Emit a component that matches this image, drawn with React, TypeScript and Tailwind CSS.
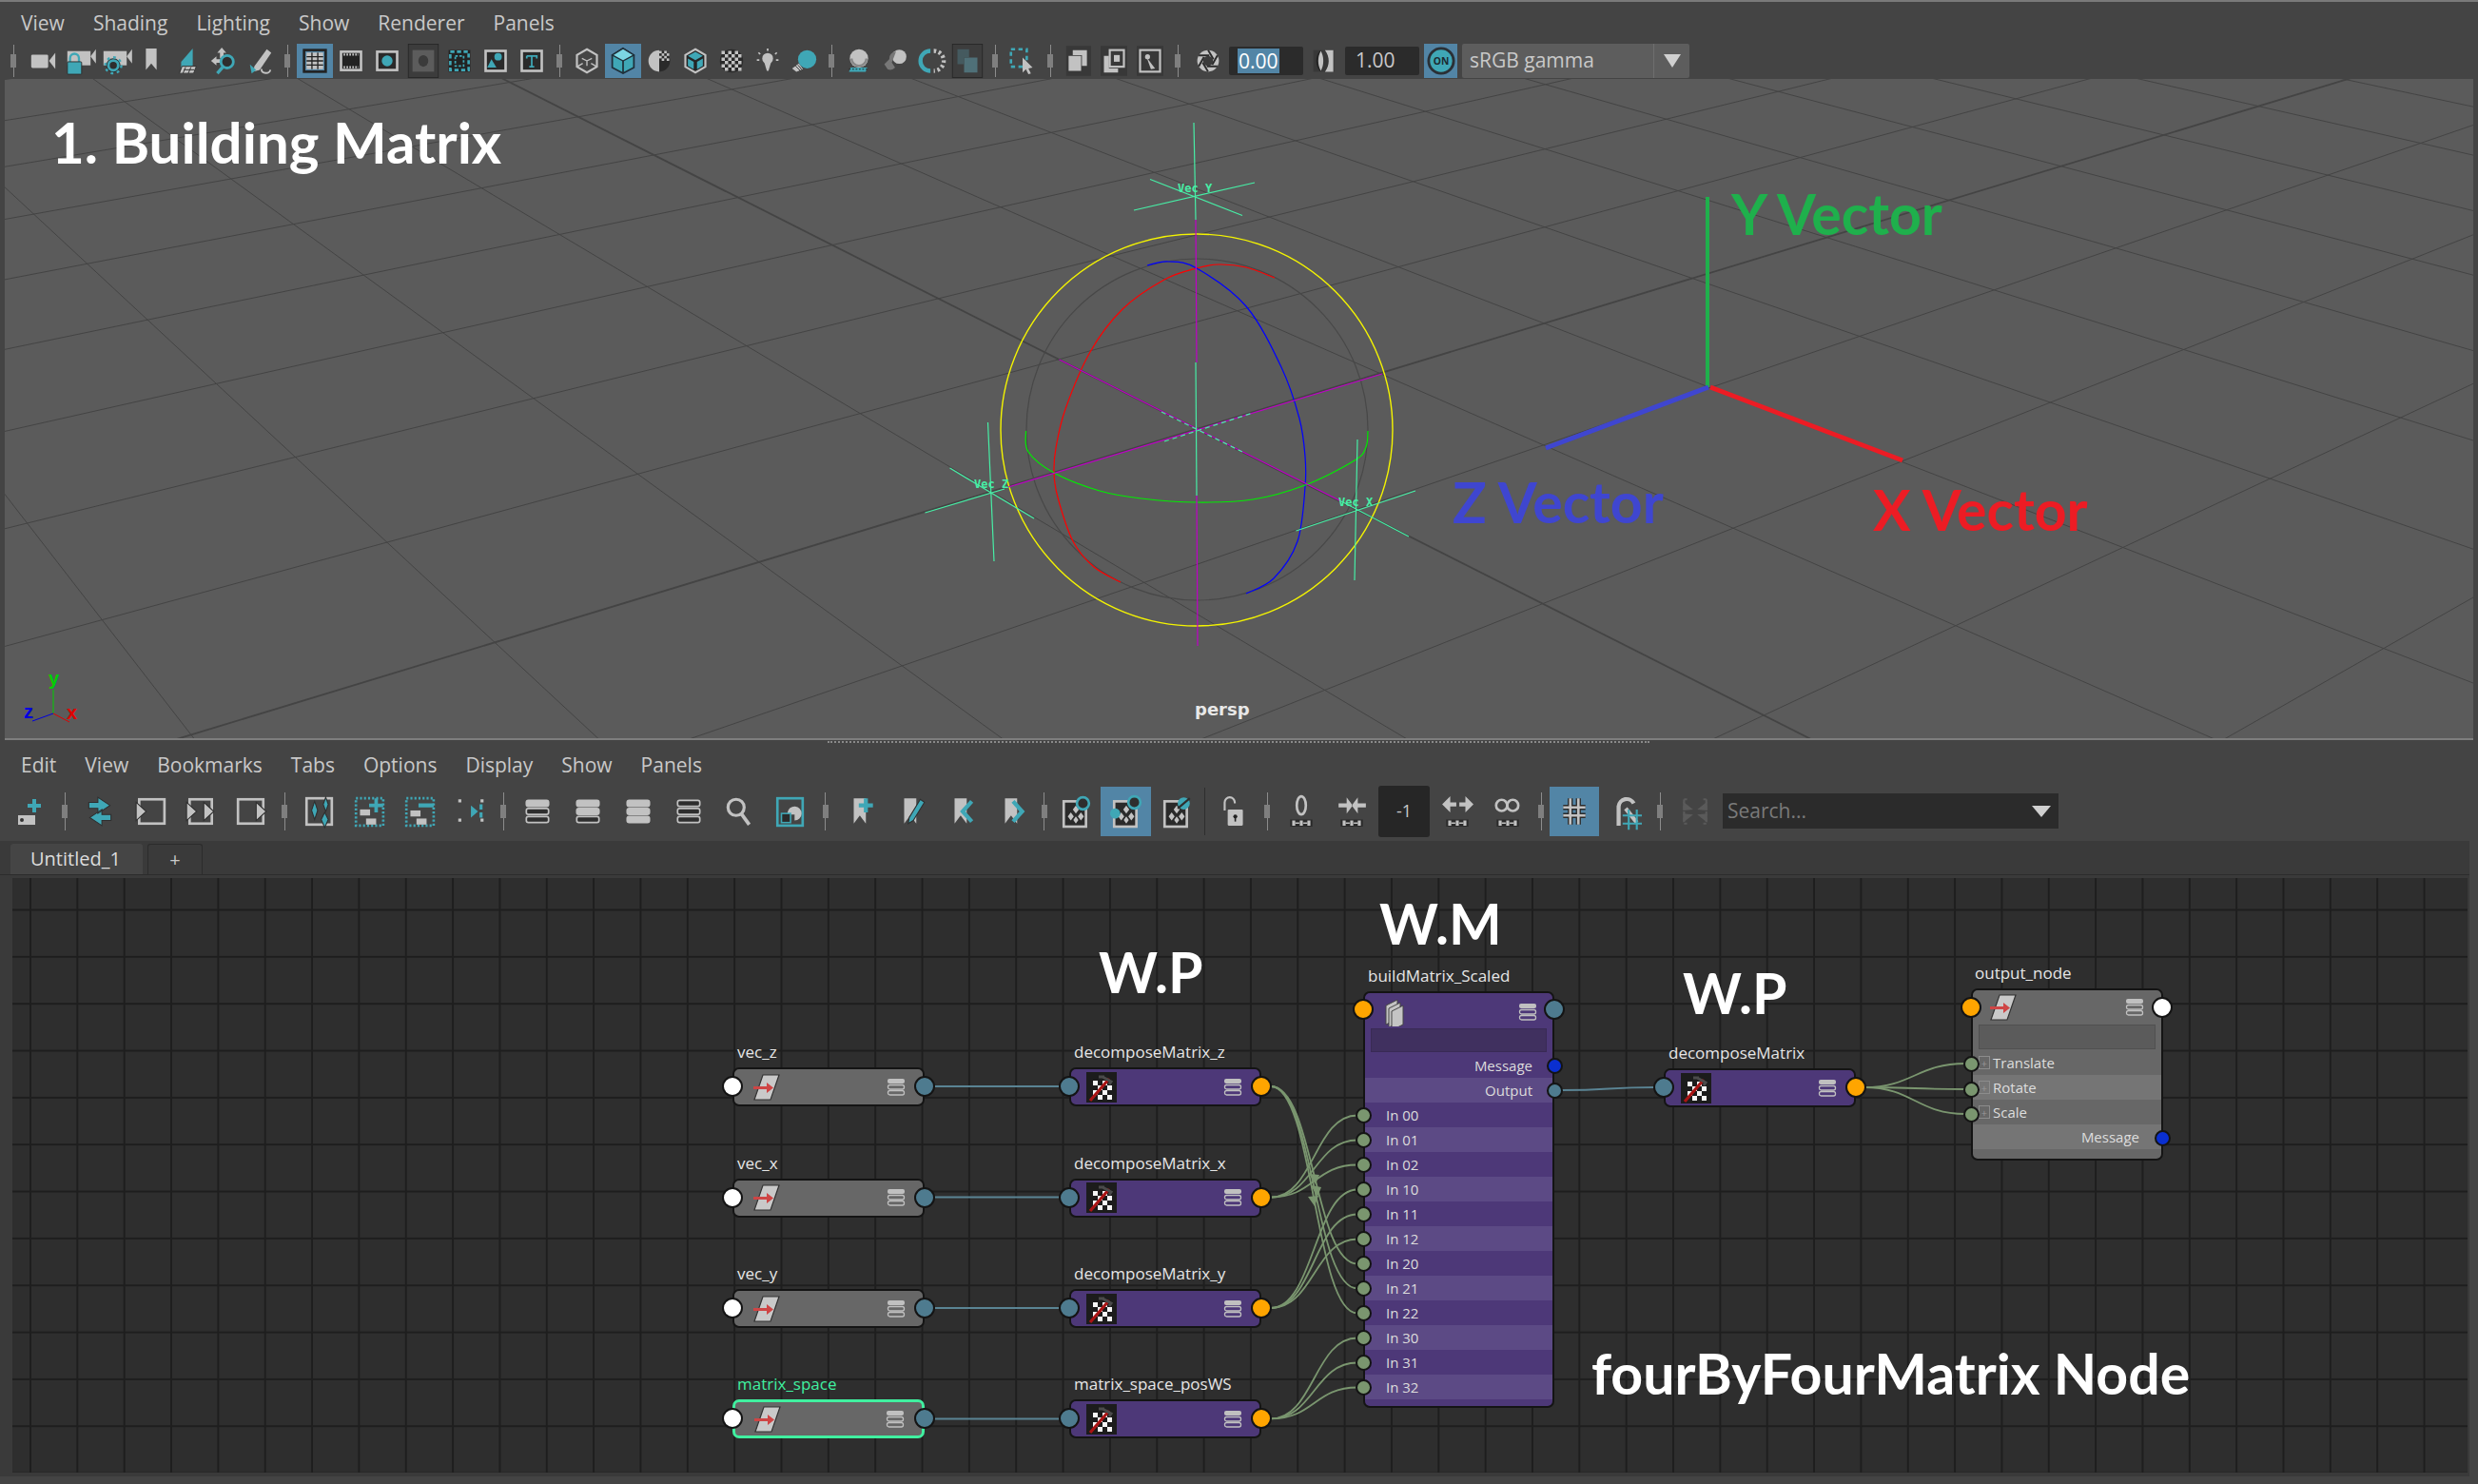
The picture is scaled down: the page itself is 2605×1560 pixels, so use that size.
import React from "react";

const G = "#c2c2c2";
const T = "#3fa7b6";
const D = "#2e2e2e";

const ff = { fontFamily: '"Open Sans", sans-serif' };

function Rows({ k }: { k: boolean[] }) {
  return (
    <>
      {k.map((f, i) => (
        <rect key={i} x="5" y={5 + i * 8} width="22" height="6" rx="2" fill={f ? G : D} stroke={G} strokeWidth="1.6" />
      ))}
    </>
  );
}
const Checker = ({ x, y, n, s }: { x: number; y: number; n: number; s: number }) => (
  <>
    {Array.from({ length: n * n }).map((_, i) =>
      (i % n + Math.floor(i / n)) % 2 === 0 ? (
        <rect key={i} x={x + (i % n) * s} y={y + Math.floor(i / n) * s} width={s} height={s} fill={G} />
      ) : null
    )}
  </>
);
const Diamonds = () => (
  <>
    <path d="M16 10l3 4-3 4-3-4zM11 17l3 4-3 4-3-4zM21 17l3 4-3 4-3-4zM16 21l2.5 3.5-2.5 3.5-2.5-3.5z" fill={G} />
  </>
);
const BM = () => <path d="M8 3h12v25l-6-8-6 8z" fill={G} />;
const Dots = () => (
  <g>
    <rect x="5" y="24" width="22" height="7" fill="#2a2a2a" />
    <path d="M7 25h3v5H7zM14.5 25h3v5h-3zM22 25h3v5h-3z" fill={G} />
    <path d="M10 27.5h4M18 27.5h4" stroke={G} strokeWidth="1.5" />
  </g>
);

const icons: Record<string, React.ReactNode> = {
  cam: (
    <>
      <rect x="3" y="9" width="19" height="15" rx="1.5" fill={G} />
      <path d="M30 7v18l-7-9z" fill={G} />
    </>
  ),
  camlock: (
    <>
      <rect x="3" y="5" width="26" height="16" fill={G} />
      <path d="M35 3v16l-6-8z" fill={G} />
      <path d="M6 18v-5a5 5 0 0110 0v5" fill="none" stroke={T} strokeWidth="2.5" />
      <rect x="3" y="17" width="16" height="14" rx="1" fill={T} stroke={D} />
    </>
  ),
  camgear: (
    <>
      <rect x="3" y="5" width="26" height="16" fill={G} />
      <path d="M35 3v16l-6-8z" fill={G} />
      <circle cx="14" cy="21" r="8" fill={D} />
      <circle cx="14" cy="21" r="5.5" fill="none" stroke={T} strokeWidth="3" />
      <circle cx="14" cy="21" r="9" fill="none" stroke={T} strokeWidth="2.5" strokeDasharray="3 4" />
    </>
  ),
  bm: <path d="M10 2h12v24l-6-7-6 7z" fill={G} />,
  plane: (
    <>
      <path d="M9 17L22 2v19L9 30z" fill={T} />
      <path d="M7 30l3-8h16l-3 8z" fill={G} stroke={D} />
      <path d="M12 26h12M14 23l-3 7M20 23l-3 7" stroke={D} />
    </>
  ),
  panzoom: (
    <>
      <path d="M14 1l5 6h-3v6h-4V7H9zM2 16l6-5v3h6v4H8v3z" fill={G} />
      <circle cx="20" cy="17" r="7" fill={D} stroke={T} strokeWidth="3" />
      <path d="M15 23l-6 7" stroke={T} strokeWidth="3.5" />
    </>
  ),
  pencil: (
    <>
      <path d="M10 22L24 3l5 4L16 26l-7 2z" fill={G} />
      <path d="M5 20l7 6-5 4z" fill={T} />
      <path d="M18 25c0 6 9 6 10 1" fill="none" stroke={G} strokeWidth="2" />
    </>
  ),
  gridb: (
    <>
      <rect x="3" y="3" width="26" height="26" fill="none" stroke="#222" strokeWidth="3" />
      <Checker x={6} y={6} n={1} s={20} />
      <path d="M12.5 6v20M19.5 6v20M6 11h20M6 16h20M6 21h20" stroke="#222" strokeWidth="1.5" />
    </>
  ),
  film: (
    <>
      <rect x="4" y="5" width="24" height="22" fill="#222" stroke={G} strokeWidth="3" />
      <path d="M7 8.5h18M7 23.5h18" stroke={G} strokeWidth="2.5" strokeDasharray="2 1.5" />
    </>
  ),
  res: (
    <>
      <rect x="4" y="5" width="24" height="22" fill="#2a2a2a" stroke={G} strokeWidth="3" />
      <circle cx="16" cy="16" r="6.5" fill={T} />
    </>
  ),
  resD: (
    <>
      <rect x="-2" y="-4" width="36" height="40" fill="#3c3c3c" stroke="#262626" />
      <rect x="3" y="3" width="26" height="26" fill="#5c5c5c" />
      <ellipse cx="16" cy="16" rx="6" ry="7" fill="#3b3b3b" />
    </>
  ),
  gate: (
    <>
      <rect x="3" y="3" width="26" height="26" fill="#222" />
      <rect x="5" y="5" width="22" height="22" fill="none" stroke={T} strokeWidth="3" strokeDasharray="5 3" />
      <rect x="11" y="10" width="10" height="12" fill="none" stroke={T} strokeWidth="2" strokeDasharray="3 2" />
    </>
  ),
  shapes: (
    <>
      <rect x="4" y="4" width="24" height="24" fill="#2a2a2a" stroke={G} strokeWidth="3" />
      <path d="M11 14l6 10H6z" fill={T} />
      <circle cx="19" cy="11" r="4.5" fill={T} />
    </>
  ),
  tbox: (
    <>
      <rect x="4" y="4" width="24" height="24" fill="#2a2a2a" stroke={G} strokeWidth="3" />
      <path d="M10 10h12v3M16 10v13M13 23h6M10 13v-3" fill="none" stroke={T} strokeWidth="2" />
    </>
  ),
  cubeW: (
    <>
      <path d="M16 2l12 7v14l-12 7-12-7V9z" fill="none" stroke={G} strokeWidth="2.5" />
      <path d="M16 16v6M16 16l-6-3M16 16l6-3M4 23l7-4M28 23l-7-4" stroke={G} strokeWidth="1.5" />
    </>
  ),
  cubeS: (
    <>
      <path d="M16 1l13 8v15l-13 7-13-7V9z" fill={T} stroke="#1f2f3a" strokeWidth="2" />
      <path d="M16 1l13 8-13 7-13-7z" fill="#7cd6e3" stroke="#1f2f3a" strokeWidth="1.5" />
      <path d="M16 16v15" stroke="#1f2f3a" strokeWidth="2" />
    </>
  ),
  halfS: (
    <>
      <circle cx="16" cy="16" r="13" fill="#2a2a2a" />
      <path d="M16 3a13 13 0 000 26z" fill={G} />
      <Checker x={16} y={4} n={4} s={3} />
    </>
  ),
  cubeT: (
    <>
      <path d="M16 2l12 7v14l-12 7-12-7V9z" fill="#252525" stroke={G} strokeWidth="2.5" />
      <path d="M16 5l9 5-9 5-9-5z" fill={T} />
      <path d="M7 13l7 4v9l-7-4zM25 13l-7 4v9l7-4z" fill={T} />
    </>
  ),
  checkS: (
    <>
      <circle cx="16" cy="16" r="14" fill="#2a2a2a" />
      <Checker x={4} y={4} n={6} s={4} />
    </>
  ),
  bulb: (
    <>
      <circle cx="16" cy="13" r="6.5" fill={G} />
      <path d="M12 18h8l-3 10h-2z" fill={G} />
      <path d="M16 1v3M5 6l2 2M27 6l-2 2M3 15h3M26 15h3" stroke={G} strokeWidth="2" />
    </>
  ),
  litS: (
    <>
      <circle cx="20" cy="14" r="11" fill={T} />
      <path d="M2 25l8-6 5 7-8 3z" fill={G} />
      <path d="M6 22l6 6M9 21l5 6" stroke={D} />
    </>
  ),
  shadS: (
    <>
      <circle cx="16" cy="13" r="11" fill={G} />
      <path d="M7 13a9 9 0 0018 0" fill="none" stroke="#888" strokeWidth="3" />
      <path d="M6 24h20l-2 5H4z" fill={T} />
      <path d="M4 26h22" stroke="#222" strokeDasharray="2 2" />
    </>
  ),
  capS: (
    <>
      <circle cx="21" cy="11" r="8.5" fill={G} />
      <path d="M9 14a8 8 0 018-9l-5 13 4 6a8 8 0 01-9 2l-4-6z" fill="#777" />
    </>
  ),
  ringS: (
    <>
      <path d="M15 4a12 12 0 000 24" fill="none" stroke={T} strokeWidth="5" />
      <path d="M19 4a12 12 0 010 24" fill="none" stroke={G} strokeWidth="5" strokeDasharray="3 3" />
    </>
  ),
  dimD: (
    <>
      <rect x="-2" y="-4" width="36" height="40" fill="#3d3d3d" stroke="#262626" />
      <rect x="12" y="12" width="16" height="18" fill="#4f7078" />
      <path d="M4 2h14v10H12v8H4z" fill="#455a5f" />
    </>
  ),
  selCursor: (
    <>
      <rect x="2" y="2" width="19" height="21" fill="none" stroke={T} strokeWidth="3" strokeDasharray="5 4" />
      <path d="M16 12l12 12-5 1 3 6-3 1-3-6-4 4z" fill={G} />
    </>
  ),
  boxes1: (
    <>
      <rect x="2" y="-2" width="30" height="36" fill="#383838" />
      <path d="M10 3h17v19h-6v-13H10z" fill={G} />
      <path d="M5 10h15v18H5z" fill={G} />
    </>
  ),
  boxes2: (
    <>
      <rect x="0" y="-2" width="32" height="36" fill="#383838" />
      <rect x="11" y="3" width="17" height="20" fill="none" stroke={G} strokeWidth="2.5" />
      <path d="M4 10h6v15h11v5H4z" fill={G} />
      <rect x="16" y="9" width="7" height="8" fill={G} />
    </>
  ),
  image: (
    <>
      <rect x="0" y="-2" width="32" height="36" fill="#383838" />
      <rect x="4" y="3" width="24" height="26" fill="none" stroke={G} strokeWidth="2.5" />
      <circle cx="13" cy="11" r="3" fill={G} />
      <path d="M12 12l10 13-5 1z" fill={G} />
    </>
  ),
  aperture: (
    <>
      <circle cx="16" cy="16" r="13" fill={G} />
      {[0, 60, 120, 180, 240, 300].map((a) => (
        <path key={a} d="M16 3L22.5 14" stroke="#2a2a2a" strokeWidth="2.2" transform={`rotate(${a} 16 16)`} />
      ))}
      <circle cx="16" cy="16" r="6" fill="#3a3a3a" />
    </>
  ),
  halfC: (
    <>
      <rect x="3" y="3" width="25" height="26" fill="#383838" />
      <path d="M17 3h10v26H17c6-8 6-18 0-26z" fill={G} />
      <path d="M12 4C6 11 6 21 12 28" fill="none" stroke="#222" strokeWidth="2" />
      <path d="M12 4C8 11 8 21 12 28c4-7 4-17 0-24z" fill="#c2c2c2" />
    </>
  ),
  on: (
    <>
      <circle cx="16" cy="16" r="14" fill={T} stroke="#2a3036" strokeWidth="3" />
      <text x="16" y="20.5" textAnchor="middle" fontSize="11" fontWeight="700" fill="#1c2a30" fontFamily="Open Sans">ON</text>
    </>
  ),
  addNode: (
    <>
      <path d="M3 20h18v10H3z" fill={G} />
      <circle cx="7" cy="25" r="2" fill="#333" />
      <path d="M20 3v14M13 10h14" stroke={T} strokeWidth="4" />
    </>
  ),
  swap: <path d="M14 2l12 8-12 8v-5H5V7h9zM18 14v5h9v6h-9v5L6 22z" fill={T} stroke={D} />,
  gL: (
    <>
      <rect x="5" y="4" width="25" height="24" fill="none" stroke={G} strokeWidth="2.5" />
      <path d="M2 7l10 9-10 9z" fill={G} stroke={D} />
    </>
  ),
  gB: (
    <>
      <rect x="5" y="4" width="22" height="24" fill="none" stroke={G} strokeWidth="2.5" />
      <path d="M2 7l10 9-10 9zM19 7l10 9-10 9z" fill={G} stroke={D} />
    </>
  ),
  gR: (
    <>
      <rect x="3" y="4" width="25" height="24" fill="none" stroke={G} strokeWidth="2.5" />
      <path d="M21 7l10 9-10 9z" fill={G} stroke={D} />
    </>
  ),
  sparkle: (
    <>
      <rect x="4" y="3" width="25" height="26" fill="none" stroke={G} strokeWidth="2.5" />
      <path d="M12 6l3 9-3 9-3-9zM23 2l2.5 7-2.5 7-2.5-7zM22 17l3.5 7-3.5 8-3.5-8z" fill={T} stroke={D} />
    </>
  ),
  lPlus: (
    <>
      <rect x="3" y="3" width="27" height="27" fill="none" stroke={T} strokeWidth="2.5" strokeDasharray="2 2" />
      <rect x="7" y="14" width="10" height="6" fill={G} />
      <rect x="13" y="23" width="10" height="6" fill={G} />
      <path d="M23 3v14M16 10h14" stroke={T} strokeWidth="3.5" />
    </>
  ),
  lMinus: (
    <>
      <rect x="3" y="3" width="27" height="27" fill="none" stroke={T} strokeWidth="2.5" strokeDasharray="2 2" />
      <rect x="7" y="15" width="10" height="6" fill={G} />
      <rect x="13" y="23" width="10" height="6" fill={G} />
      <path d="M15 10h15" stroke={T} strokeWidth="4" />
    </>
  ),
  inOut: (
    <>
      <path d="M6 4v5M6 23v5M28 4v5M28 23v5" stroke={G} strokeWidth="3" strokeDasharray="3 3" />
      <path d="M27 9v14" stroke={T} strokeWidth="3" strokeDasharray="5 3" />
      <path d="M8 16h9V10l7 6-7 6v-6" fill={T} />
    </>
  ),
  r1: <Rows k={[true, false, false]} />,
  r2: <Rows k={[true, true, false]} />,
  r3: <Rows k={[true, true, true]} />,
  r0: <Rows k={[false, false, false]} />,
  search: (
    <>
      <circle cx="13" cy="12" r="8" fill="none" stroke={G} strokeWidth="3" />
      <path d="M18 18l8 11" stroke={G} strokeWidth="3.5" />
    </>
  ),
  frame: (
    <>
      <rect x="4" y="3" width="25" height="27" fill="none" stroke={T} strokeWidth="2.5" />
      <path d="M14 17a7 7 0 117 8v-6h-7z" fill={G} />
      <rect x="8" y="18" width="9" height="9" fill="#2a2a2a" stroke={T} strokeWidth="1.5" />
    </>
  ),
  bmAdd: (
    <>
      <BM />
      <path d="M20 3v14M13 10h14" stroke={T} strokeWidth="4" />
    </>
  ),
  bmEdit: (
    <>
      <BM />
      <path d="M13 22L24 4l4 3-11 18-5 3z" fill={T} stroke={D} />
    </>
  ),
  bmPrev: (
    <>
      <BM />
      <path d="M25 6l-9 10 9 10" fill="none" stroke={T} strokeWidth="4" />
    </>
  ),
  bmNext: (
    <>
      <BM />
      <path d="M16 6l9 10-9 10" fill="none" stroke={T} strokeWidth="4" />
    </>
  ),
  nodeA: (
    <>
      <rect x="4" y="6" width="22" height="25" fill="#2a2a2a" stroke={G} strokeWidth="2.5" />
      <Diamonds />
      <circle cx="23" cy="8" r="6" fill={D} stroke={T} strokeWidth="2.5" />
    </>
  ),
  nodeB: (
    <>
      <rect x="4" y="6" width="22" height="25" fill="#2a2a2a" stroke={G} strokeWidth="2.5" />
      <Diamonds />
      <circle cx="24" cy="7" r="6" fill={D} stroke={T} strokeWidth="2.5" />
      <circle cx="5" cy="18" r="5" fill={T} />
    </>
  ),
  nodeC: (
    <>
      <rect x="4" y="6" width="22" height="25" fill="#2a2a2a" stroke={G} strokeWidth="2.5" />
      <Diamonds />
      <circle cx="23" cy="8" r="6" fill={T} />
      <path d="M17 13L29 3" stroke={D} strokeWidth="2" />
    </>
  ),
  lock: (
    <>
      <path d="M8 15V7a5 5 0 0110 0v1" fill="none" stroke={G} strokeWidth="2" transform="translate(-1 0)" />
      <rect x="10" y="14" width="15" height="16" rx="1" fill={G} />
      <circle cx="17.5" cy="21" r="2" fill="#222" />
      <path d="M17.5 21v5" stroke="#222" strokeWidth="1.5" />
    </>
  ),
  zero: (
    <>
      <ellipse cx="16" cy="10" rx="4.5" ry="9" fill="none" stroke={G} strokeWidth="2.5" />
      <Dots />
    </>
  ),
  pinch: (
    <>
      <path d="M3 8h8V2l6 8-6 8v-6H3zM30 8h-8V2l-6 8 6 8v-6h8z" fill={G} />
      <Dots />
    </>
  ),
  spread: (
    <>
      <path d="M15 7H9V1L1 9l8 8v-6h6zM18 7h6V1l8 8-8 8v-6h-6z" fill={G} />
      <Dots />
    </>
  ),
  infin: (
    <>
      <circle cx="10" cy="10" r="5.5" fill="none" stroke={G} strokeWidth="2.5" />
      <circle cx="21" cy="10" r="5.5" fill="none" stroke={G} strokeWidth="2.5" />
      <Dots />
    </>
  ),
  hash: (
    <>
      <path d="M12 3v26M20 3v26M5 12h22M5 20h22" stroke="#2a2a2a" strokeWidth="5" />
      <path d="M12 3v26M20 3v26M5 12h22M5 20h22" stroke={G} strokeWidth="2.5" />
    </>
  ),
  magnet: (
    <>
      <path d="M9 30V11a8 8 0 0115 -3" fill="none" stroke={G} strokeWidth="4" />
      <path d="M16 13l11 14" stroke={G} strokeWidth="4" />
      <path d="M19 14v20M27 14v20M13 20h19M13 28h19" stroke={T} strokeWidth="2" />
    </>
  ),
  dimFrame: (
    <>
      <path d="M6 4v24M28 4v24M6 4h3M25 4h3M6 28h3M25 28h3" stroke="#5a5a5a" strokeWidth="2" strokeDasharray="4 2" />
      <path d="M5 6l10 8-10 1zM29 6l-10 8 10 1zM5 27l10-8-10-1zM29 27l-10-8 10-1z" fill="#5a5a5a" />
    </>
  ),
};

function Ic({ n, s = 32, active, w, h }: { n: string; s?: number; active?: boolean; w: string; h: string }) {
  return (
    <div className={`${w} ${h} shrink-0 flex items-center justify-center ${active ? "bg-[#5285a6]" : ""}`}>
      <svg width={s} height={s} viewBox="0 0 32 32" className="overflow-visible">
        {icons[n]}
      </svg>
    </div>
  );
}

function Sep({ h = "h-[34px]", w = "w-[20px]" }: { h?: string; w?: string }) {
  return (
    <div className={`${w} ${h} shrink-0 flex items-center justify-center relative`}>
      <div className="w-[1px] h-full bg-[#8c8c8c]" />
      <div className="absolute w-[6px] h-[14px] bg-[#7f7f7f]" />
    </div>
  );
}

function Menu({ items, gap }: { items: string[]; gap: string }) {
  return (
    <div className={`flex items-center ${gap} pl-[22px] text-[21px] leading-none text-[#c9c9c9]`} style={ff}>
      {items.map((m) => (
        <span key={m}>{m}</span>
      ))}
    </div>
  );
}

/* ---- perspective ground grid ---- */
const O = [1258, 451];
const A = [155.5, 78.5];
const B = [203.6, -61.9];
const pb = -0.0725;
const pd = 0.0574;
function proj(u: number, v: number) {
  const w = 1 + pb * u + pd * v;
  return [O[0] + (u * A[0] + v * B[0]) / w, O[1] + (u * A[1] + v * B[1]) / w];
}
function gridLines() {
  const out: { d: string; thick: boolean; k: string }[] = [];
  for (let k = -24; k <= 24; k++) {
    const v0 = Math.max(-40, (0.1 - 1 - pb * k) / pd);
    const p0 = proj(k, v0);
    const p1 = proj(k, 30);
    out.push({ d: `M${p0[0]} ${p0[1]}L${p1[0]} ${p1[1]}`, thick: k === 0, k: "u" + k });
    const u1 = Math.min(40, (0.1 - 1 - pd * k) / pb);
    const q0 = proj(-30, k);
    const q1 = proj(u1, k);
    out.push({ d: `M${q0[0]} ${q0[1]}L${q1[0]} ${q1[1]}`, thick: k === 0, k: "v" + k });
  }
  return out;
}
function smooth(p: number[][]) {
  let d = `M${p[0][0]} ${p[0][1]}`;
  for (let i = 0; i < p.length - 1; i++) {
    const p0 = p[Math.max(0, i - 1)];
    const p1 = p[i];
    const p2 = p[i + 1];
    const p3 = p[Math.min(p.length - 1, i + 2)];
    d += `C${p1[0] + (p2[0] - p0[0]) / 6} ${p1[1] + (p2[1] - p0[1]) / 6} ${p2[0] - (p3[0] - p1[0]) / 6} ${p2[1] - (p3[1] - p1[1]) / 6} ${p2[0]} ${p2[1]}`;
  }
  return d;
}
const CY = "#47eea6";
const MG = "#c000c8";

function Scene() {
  return (
    <svg className="absolute inset-0" width="2595" height="693" viewBox="5 83 2595 693">
      {gridLines().map((l) => (
        <path key={l.k} d={l.d} stroke="#444444" strokeWidth={l.thick ? 1.8 : 1} fill="none" />
      ))}
      <g fill="none" strokeWidth="1.2">
        <circle cx="1258.5" cy="451.5" r="179.5" stroke="#484848" />
        <circle cx="1258" cy="452" r="206" stroke="#f4f400" strokeWidth="1.4" />
        <path stroke="#ff0000" d={smooth([[1340, 292], [1310, 281], [1281, 278], [1258, 282], [1224, 294], [1180, 325], [1146, 370], [1120, 430], [1110, 471], [1108, 497], [1112, 523], [1128, 569], [1150, 596], [1178, 612]])} />
        <path stroke="#0000ff" d={smooth([[1206, 279], [1228, 275], [1258, 282], [1310, 322], [1347, 386], [1366, 440], [1372, 480], [1372, 512], [1364, 569], [1339, 608], [1310, 624]])} />
        <path stroke="#00ee00" d={smooth([[1078.5, 453], [1081, 475], [1108, 497], [1156, 516], [1200, 524], [1258, 528], [1317, 525], [1372, 510], [1424, 484], [1436, 470], [1438, 453]])} />
        <path stroke={MG} d="M1257 231L1258 381M1258 521L1259 679M1113.5 378L1410 527M1060 512L1453 393" />
        <path stroke={CY} strokeDasharray="5 4" d="M1221 433L1306 475M1224 464L1317 434" />
        <path stroke={CY} d="M1255 129L1257 231M1257 381L1258 521" />
        <path stroke={CY} d="M1209 188.5L1306 226.5M1192 221L1319 192M1038.5 444L1045 590M998.5 492L1087 545M972.5 539L1056 514M1427 462L1424 610M1362.5 558L1488 516M1410 527L1481 564" />
      </g>
      <g fill="none" strokeLinecap="butt">
        <path d="M1795 207V407" stroke="#1fb04c" strokeWidth="4" />
        <path d="M1796 407L1625 471" stroke="#3f46d0" strokeWidth="5" />
        <path d="M1798 407L2000 484" stroke="#ed1c24" strokeWidth="5" />
        <path d="M56 725V750" stroke="#00d000" />
        <path d="M56 750L73 759" stroke="#e00000" />
        <path d="M56 750L34 758" stroke="#0000e0" />
      </g>
    </svg>
  );
}

/* ---- node editor ---- */
const ARROW_BAR = (
  <svg width="20" height="20" viewBox="0 0 20 20" className="shrink-0">
    <rect x="1" y="1" width="18" height="5" rx="2" fill="#c0c0c0" />
    <rect x="1.5" y="7.5" width="17" height="4.5" rx="2" fill="none" stroke="#c0c0c0" strokeWidth="1.3" />
    <rect x="1.5" y="13.5" width="17" height="4.5" rx="2" fill="none" stroke="#c0c0c0" strokeWidth="1.3" />
  </svg>
);
const VecIcon = () => (
  <svg width="28" height="28" viewBox="0 0 28 28" className="shrink-0">
    <path d="M10 1h17L18 27H1z" fill="#c9c9c9" stroke="#333" strokeWidth="1.2" />
    <path d="M0 13h14V9l7 5.5-7 5.5v-4H0z" fill="#cf4545" />
  </svg>
);
const CheckIcon = ({ w = 32 }: { w?: number }) => (
  <svg width={w} height="32" viewBox="0 0 32 32" preserveAspectRatio="none" className="shrink-0">
    <rect width="32" height="32" fill="#1c1c1c" />
    {[[7, 9], [17, 9], [12, 14], [22, 14], [7, 19], [17, 19], [12, 24], [22, 24]].map(([x, y], i) => (
      <rect key={i} x={x} y={y} width="5" height="5" fill="#f6f6f6" />
    ))}
    <path d="M4 30L24 7" stroke="#aa1414" strokeWidth="3.2" />
    <path d="M17 5l9 5-2 3M13 5h6" stroke="#4a4a4a" strokeWidth="3" fill="none" />
  </svg>
);
const StackIcon = () => (
  <svg width="24" height="30" viewBox="0 0 24 30" className="shrink-0">
    {[0, 3, 6].map((o) => (
      <path key={o} d={`M${1 + o} ${8 + o}l12-6v20l-12 6z`} fill="#c4c4c4" stroke="#444" />
    ))}
  </svg>
);

type Kind = "orange" | "teal" | "white" | "green" | "blue";
const portCol: Record<Kind, string> = {
  orange: "bg-[#ffa500]",
  teal: "bg-[#4e7b8f]",
  white: "bg-white",
  green: "bg-[#7a966f]",
  blue: "bg-[#0a2fd0]",
};
const CX = 13;
const CYY = 923;
function Port({ x, y, k, small }: { x: number; y: number; k: Kind; small?: boolean }) {
  const s = small ? 17 : 22;
  return (
    <div
      className={`absolute rounded-full border-2 border-[#141414] ${portCol[k]}`}
      style={{ left: x - CX - s / 2, top: y - CYY - s / 2, width: s, height: s }}
    />
  );
}
function Label({ x, y, t, sel }: { x: number; y: number; t: string; sel?: boolean }) {
  return (
    <div
      className={`absolute text-[17px] leading-none whitespace-nowrap ${sel ? "text-[#40f0a0]" : "text-[#e6e6e6]"}`}
      style={{ ...ff, left: x - CX, top: y - CYY - 9 }}
    >
      {t}
    </div>
  );
}
function SmallNode({ x, y, t, purple, sel, lk, rk }: { x: number; y: number; t: string; purple?: boolean; sel?: boolean; lk: Kind; rk: Kind }) {
  const cy = y + 20;
  return (
    <>
      <Label x={x + 5} y={y - 16} t={t} sel={sel} />
      <div
        className={`absolute w-[202px] h-[41px] rounded-[7px] flex items-center justify-between pr-[18px] ${purple ? "bg-[#4d3878] pl-[16px]" : "bg-[#676767] pl-[20px]"} ${sel ? "border-[3px] border-[#40f0a0]" : "border-2 border-[#141414]"}`}
        style={{ left: x - CX, top: y - CYY }}
      >
        {purple ? <CheckIcon /> : <VecIcon />}
        {ARROW_BAR}
      </div>
      <Port x={x} y={cy} k={lk} />
      <Port x={x + 202} y={cy} k={rk} />
    </>
  );
}

const inNames = ["In 00", "In 01", "In 02", "In 10", "In 11", "In 12", "In 20", "In 21", "In 22", "In 30", "In 31", "In 32"];
function inY(i: number) {
  return 1172.5 + 26 * i;
}
function wire(x0: number, y0: number, x1: number, y1: number, dx = 38) {
  return `M${x0} ${y0}C${x0 + dx} ${y0} ${x1 - dx} ${y1} ${x1} ${y1}`;
}
const rowsY = [1142, 1258.6, 1375, 1491.4];

function Wires() {
  const ends: [number, number[]][] = [
    [rowsY[0], [6, 7, 8]],
    [rowsY[1], [0, 1, 2]],
    [rowsY[2], [3, 4, 5]],
    [rowsY[3], [9, 10, 11]],
  ];
  return (
    <svg className="absolute inset-0" width="2581" height="625" viewBox={`${CX} ${CYY} 2581 625`}>
      <g fill="none" stroke="#5a8494" strokeWidth="2">
        {rowsY.map((y) => (
          <path key={y} d={`M982 ${y}H1116`} />
        ))}
        <path d={wire(1642, 1146, 1740, 1143, 50)} />
      </g>
      <g fill="none" stroke="#7a966f" strokeWidth="1.8">
        {ends.map(([y, is]) =>
          is.map((i) => <path key={i} d={wire(1336, y, 1427, inY(i), 45)} />)
        )}
        <path d={wire(1960, 1143, 2066, 1118, 50)} />
        <path d={wire(1960, 1143, 2066, 1145, 50)} />
        <path d={wire(1960, 1143, 2066, 1171, 50)} />
      </g>
      <g fill="#7a966f">
        <path d="M1376 1234l11 1-4 10zM1378 1246l11 2-4 10zM1375 1258l11-1-4 11z" />
      </g>
    </svg>
  );
}

function BuildNode() {
  return (
    <>
      <Label x={1438} y={1026} t="buildMatrix_Scaled" />
      <div
        className="absolute w-[201px] h-[438px] rounded-[7px] border-2 border-[#141414] bg-[#4d3878] flex flex-col"
        style={{ left: 1433 - CX, top: 1042 - CYY }}
      >
        <div className="h-[37px] shrink-0 flex items-center justify-between pl-[21px] pr-[16px] pt-[2px]">
          <StackIcon />
          {ARROW_BAR}
        </div>
        <div className="mx-[6px] h-[25px] shrink-0 bg-[#40305f] border border-[#392a55]" />
        <div className="h-[1px] shrink-0" />
        {["Message", "Output"].map((t, i) => (
          <div
            key={t}
            className={`h-[26px] shrink-0 flex items-center justify-end pr-[21px] text-[15px] text-[#dcdcdc] ${i % 2 ? "bg-[#5c4a85]" : ""}`}
            style={ff}
          >
            {t}
          </div>
        ))}
        {inNames.map((t, i) => (
          <div
            key={t}
            className={`h-[26px] shrink-0 flex items-center pl-[22px] text-[15px] text-[#dcdcdc] ${i % 2 ? "bg-[#5c4a85]" : ""}`}
            style={ff}
          >
            {t}
          </div>
        ))}
      </div>
      <Port x={1433} y={1061} k="orange" />
      <Port x={1634} y={1061} k="teal" />
      <Port x={1634} y={1120} k="blue" small />
      <Port x={1634} y={1146} k="teal" small />
      {inNames.map((t, i) => (
        <Port key={t} x={1433} y={inY(i)} k="green" small />
      ))}
    </>
  );
}
function OutputNode() {
  const rows = [
    { t: "Translate", y: 1118 },
    { t: "Rotate", y: 1145 },
    { t: "Scale", y: 1171 },
  ];
  return (
    <>
      <Label x={2076} y={1023} t="output_node" />
      <div
        className="absolute w-[202px] h-[181px] rounded-[7px] border-2 border-[#141414] bg-[#676767] flex flex-col"
        style={{ left: 2072 - CX, top: 1039 - CYY }}
      >
        <div className="h-[36px] shrink-0 flex items-center justify-between pl-[18px] pr-[18px]">
          <VecIcon />
          {ARROW_BAR}
        </div>
        <div className="mx-[6px] h-[26px] shrink-0 bg-[#5b5b5b] border border-[#505050]" />
        <div className="h-[1px] shrink-0" />
        {rows.map((r, i) => (
          <div
            key={r.t}
            className={`h-[26px] shrink-0 flex items-center pl-[6px] gap-[3px] text-[15px] text-[#dedede] ${i === 1 ? "bg-[#757575]" : ""}`}
            style={ff}
          >
            <span className="w-[12px] h-[14px] border border-[#8c8c8c] flex items-center justify-center text-[11px] leading-none text-[#9a9a9a]">+</span>
            {r.t}
          </div>
        ))}
        <div className="h-[26px] shrink-0 flex items-center justify-end pr-[23px] text-[15px] text-[#dedede] bg-[#757575]" style={ff}>
          Message
        </div>
      </div>
      <Port x={2072} y={1059} k="orange" />
      <Port x={2273} y={1059} k="white" />
      {rows.map((r) => (
        <Port key={r.t} x={2072} y={r.y} k="green" small />
      ))}
      <Port x={2273} y={1196} k="blue" small />
    </>
  );
}

function Ann({ t, c, cls }: { t: string; c?: string; cls: string }) {
  return (
    <div className={`absolute font-bold leading-none whitespace-nowrap ${c ?? "text-white"} ${cls}`} style={{ fontFamily: "Lato, sans-serif" }}>
      {t}
    </div>
  );
}

const tb1a = ["cam", "camlock", "camgear", "bm", "plane", "panzoom", "pencil"];
const tb1b = ["gridb", "film", "res", "resD", "gate", "shapes", "tbox"];
const tb1c = ["cubeW", "cubeS", "halfS", "cubeT", "checkS", "bulb", "litS"];
const tb1d = ["shadS", "capS", "ringS", "dimD"];
const tb1e = ["boxes1", "boxes2", "image"];
const tb2a = ["swap", "gL", "gB", "gR"];
const tb2b = ["sparkle", "lPlus", "lMinus", "inOut"];
const tb2c = ["r1", "r2", "r3", "r0", "search", "frame"];
const tb2d = ["bmAdd", "bmEdit", "bmPrev", "bmNext"];

const w38 = "w-[38px]";
const h36 = "h-[36px]";
const w53 = "w-[53px]";
const h52 = "h-[52px]";

export default function App() {
  return (
    <div className="relative w-[2605px] h-[1560px] overflow-hidden bg-[#444444] flex flex-col" style={ff}>
      {/* top panel */}
      <div className="h-[778px] shrink-0 flex flex-col border-t-2 border-[#7a7a7a]">
        <div className="h-[43px] shrink-0 flex items-center pt-[1px]">
          <Menu items={["View", "Shading", "Lighting", "Show", "Renderer", "Panels"]} gap="gap-[30px]" />
        </div>
        <div className="h-[38px] shrink-0 flex items-center pl-[4px]">
          <Sep />
          <div className="w-[2px] shrink-0" />
          {tb1a.map((n) => <Ic key={n} n={n} w={w38} h={h36} s={30} />)}
          <Sep />
          {tb1b.map((n, i) => <Ic key={n} n={n} w={w38} h={h36} s={28} active={i === 0} />)}
          <Sep />
          {tb1c.map((n, i) => <Ic key={n} n={n} w={w38} h={h36} s={28} active={i === 1} />)}
          <Sep />
          {tb1d.map((n) => <Ic key={n} n={n} w={w38} h={h36} s={28} />)}
          <Sep />
          <Ic n="selCursor" w={w38} h={h36} s={28} />
          <Sep />
          {tb1e.map((n) => <Ic key={n} n={n} w={w38} h={h36} s={28} />)}
          <Sep />
          <Ic n="aperture" w="w-[44px]" h={h36} s={28} />
          <div className="w-[78px] h-[30px] shrink-0 rounded-[2px] bg-[#2b2b2b] flex items-center pl-[9px]">
            <span className="bg-[#5285a6] text-white text-[21px] leading-[26px] pl-[1px] pr-[1px]">0.00</span>
          </div>
          <Ic n="halfC" w="w-[44px]" h={h36} s={28} />
          <div className="w-[78px] h-[30px] shrink-0 rounded-[2px] bg-[#2b2b2b] flex items-center pl-[11px] text-[21px] text-[#c9c9c9]">1.00</div>
          <div className="w-[5px] shrink-0" />
          <Ic n="on" w="w-[35px]" h={h36} s={30} active />
          <div className="w-[5px] shrink-0" />
          <div className="w-[239px] h-[36px] shrink-0 rounded-[2px] bg-[#5d5d5d] flex items-center">
            <span className="flex-1 pl-[8px] text-[21px] text-[#c9c9c9]">sRGB gamma</span>
            <div className="w-[38px] h-full border-l border-[#6e6e6e] flex items-center justify-center">
              <div className="w-0 h-0 border-l-[9px] border-r-[9px] border-t-[14px] border-l-transparent border-r-transparent border-t-[#d0d0d0]" />
            </div>
          </div>
        </div>
        <div className="relative flex-1 ml-[5px] mr-[5px] bg-[#5b5b5b] overflow-hidden border-b-2 border-[#7e7e7e]">
          <Scene />
          <Ann t="1. Building Matrix" cls="left-[49px] top-[36px] text-[60px]" />
          <Ann t="Y Vector" c="text-[#1fb04c]" cls="left-[1815px] top-[112px] text-[59px]" />
          <Ann t="Z Vector" c="text-[#3f46d0]" cls="left-[1522px] top-[415px] text-[59px]" />
          <Ann t="X Vector" c="text-[#ed1c24]" cls="left-[1964px] top-[423px] text-[59px]" />
          <div className="absolute left-[1251px] top-[654px] text-[18px] leading-none text-[#e8e8e8]" style={{ fontFamily: '"DejaVu Sans", sans-serif', fontWeight: 600 }}>persp</div>
          <div className="absolute left-[46px] top-[620px] text-[20px] font-bold leading-none text-[#00d000]" style={{ fontFamily: '"Liberation Sans", sans-serif' }}>y</div>
          <div className="absolute left-[20px] top-[655px] text-[20px] font-bold leading-none text-[#0000e0]" style={{ fontFamily: '"Liberation Sans", sans-serif' }}>z</div>
          <div className="absolute left-[65px] top-[656px] text-[20px] font-bold leading-none text-[#e00000]" style={{ fontFamily: '"Liberation Sans", sans-serif' }}>x</div>
          <VecLabels />
        </div>
      </div>
      {/* splitter dots */}
      <div className="h-0 relative">
        <div className="absolute left-[870px] top-[1px] w-[864px] h-[2px] border-t-2 border-dotted border-[#8a8a8a]" />
      </div>
      {/* bottom panel */}
      <div className="flex-1 flex flex-col">
        <div className="h-[53px] shrink-0 flex items-center">
          <Menu items={["Edit", "View", "Bookmarks", "Tabs", "Options", "Display", "Show", "Panels"]} gap="gap-[30px]" />
        </div>
        <div className="h-[53px] shrink-0 flex items-center pl-[5px] pb-[10px]">
          <Ic n="addNode" w="w-[53px]" h={h52} s={32} />
          <Sep h="h-[40px]" w="w-[20px]" />
          {tb2a.map((n) => <Ic key={n} n={n} w={w53} h={h52} s={34} />)}
          <Sep h="h-[40px]" w="w-[18px]" />
          {tb2b.map((n) => <Ic key={n} n={n} w={w53} h={h52} s={34} />)}
          <Sep h="h-[40px]" w="w-[18px]" />
          {tb2c.map((n) => <Ic key={n} n={n} w={w53} h={h52} s={34} />)}
          <Sep h="h-[40px]" w="w-[23px]" />
          {tb2d.map((n) => <Ic key={n} n={n} w={w53} h={h52} s={34} />)}
          <Sep h="h-[40px]" w="w-[13px]" />
          <Ic n="nodeA" w={w53} h={h52} s={34} />
          <Ic n="nodeB" w={w53} h={h52} s={34} active />
          <Ic n="nodeC" w={w53} h={h52} s={34} />
          <div className="w-[1px] h-[50px] bg-[#2e2e2e] shrink-0 ml-[3px] mr-[3px]" />
          <Ic n="lock" w="w-[53px]" h={h52} s={34} />
          <Sep h="h-[40px]" w="w-[18px]" />
          <Ic n="zero" w="w-[53px]" h={h52} s={34} />
          <Ic n="pinch" w="w-[53px]" h={h52} s={34} />
          <div className="w-[2px] shrink-0" />
          <div className="w-[54px] h-[54px] shrink-0 rounded-[3px] bg-[#262626] flex items-center justify-center text-[18px] text-[#c9c9c9]">-1</div>
          <div className="w-[2px] shrink-0" />
          <Ic n="spread" w="w-[53px]" h={h52} s={34} />
          <Ic n="infin" w="w-[53px]" h={h52} s={34} />
          <Sep h="h-[40px]" w="w-[18px]" />
          <Ic n="hash" w="w-[52px]" h={h52} s={34} active />
          <Ic n="magnet" w="w-[55px]" h={h52} s={34} />
          <Sep h="h-[40px]" w="w-[18px]" />
          <Ic n="dimFrame" w="w-[53px]" h={h52} s={34} />
          <div className="w-[353px] h-[37px] shrink-0 ml-[4px] bg-[#2b2b2b] flex items-center justify-between pl-[5px] pr-[8px] text-[21px] text-[#7a7a7a]">
            <span>Search...</span>
            <div className="w-0 h-0 border-l-[10px] border-r-[10px] border-t-[12px] border-l-transparent border-r-transparent border-t-[#d0d0d0]" />
          </div>
        </div>
        {/* tabs + canvas area */}
        <div className="flex-1 bg-[#3a3a3a] mb-[8px] mr-[9px] flex flex-col">
          <div className="h-[36px] shrink-0 pl-[11px] flex items-end gap-[5px] border-b border-[#2c2c2c]">
            <div className="w-[139px] h-[32px] bg-[#454545] rounded-t-[3px] flex items-center pl-[21px] text-[20px] text-[#dcdcdc]">Untitled_1</div>
            <div className="w-[58px] h-[32px] bg-[#3a3a3a] rounded-t-[3px] border border-b-0 border-[#2c2c2c] flex items-center justify-center text-[20px] text-[#c9c9c9]">+</div>
          </div>
          <div className="relative h-[625px] ml-[13px] mr-[2px] mt-[3px] bg-[#2e2e2e] bg-[linear-gradient(to_right,#1e1e1e_2px,transparent_2px),linear-gradient(to_bottom,#1e1e1e_2px,transparent_2px)] bg-[size:49.35px_49.35px] bg-[position:18px_32.5px]">
            <Wires />
            <SmallNode x={770} y={1122} t="vec_z" lk="white" rk="teal" />
            <SmallNode x={770} y={1238.6} t="vec_x" lk="white" rk="teal" />
            <SmallNode x={770} y={1355} t="vec_y" lk="white" rk="teal" />
            <SmallNode x={770} y={1471.4} t="matrix_space" sel lk="white" rk="teal" />
            <SmallNode x={1124} y={1122} t="decomposeMatrix_z" purple lk="teal" rk="orange" />
            <SmallNode x={1124} y={1238.6} t="decomposeMatrix_x" purple lk="teal" rk="orange" />
            <SmallNode x={1124} y={1355} t="decomposeMatrix_y" purple lk="teal" rk="orange" />
            <SmallNode x={1124} y={1471.4} t="matrix_space_posWS" purple lk="teal" rk="orange" />
            <BuildNode />
            <SmallNode x={1749} y={1123} t="decomposeMatrix" purple lk="teal" rk="orange" />
            <OutputNode />
            <Ann t="W.P" cls="left-[1142px] top-[69px] text-[59px]" />
            <Ann t="W.M" cls="left-[1437px] top-[18px] text-[59px]" />
            <Ann t="W.P" cls="left-[1756px] top-[91px] text-[59px]" />
            <Ann t="fourByFourMatrix Node" cls="left-[1660px] top-[491px] text-[59px]" />
          </div>
        </div>
      </div>
    </div>
  );
}

function VecLabels() {
  const items = [
    { t: "Vec Y", l: "left-[1233px]", tp: "top-[109px]" },
    { t: "Vec Z", l: "left-[1019px]", tp: "top-[420px]" },
    { t: "Vec X", l: "left-[1402px]", tp: "top-[439px]" },
  ];
  return (
    <>
      {items.map((i) => (
        <div
          key={i.t}
          className={`absolute ${i.l} ${i.tp} text-[12px] font-bold leading-none text-[#47eea6]`}
          style={{ fontFamily: '"DejaVu Sans Mono", monospace' }}
        >
          {i.t}
        </div>
      ))}
    </>
  );
}
